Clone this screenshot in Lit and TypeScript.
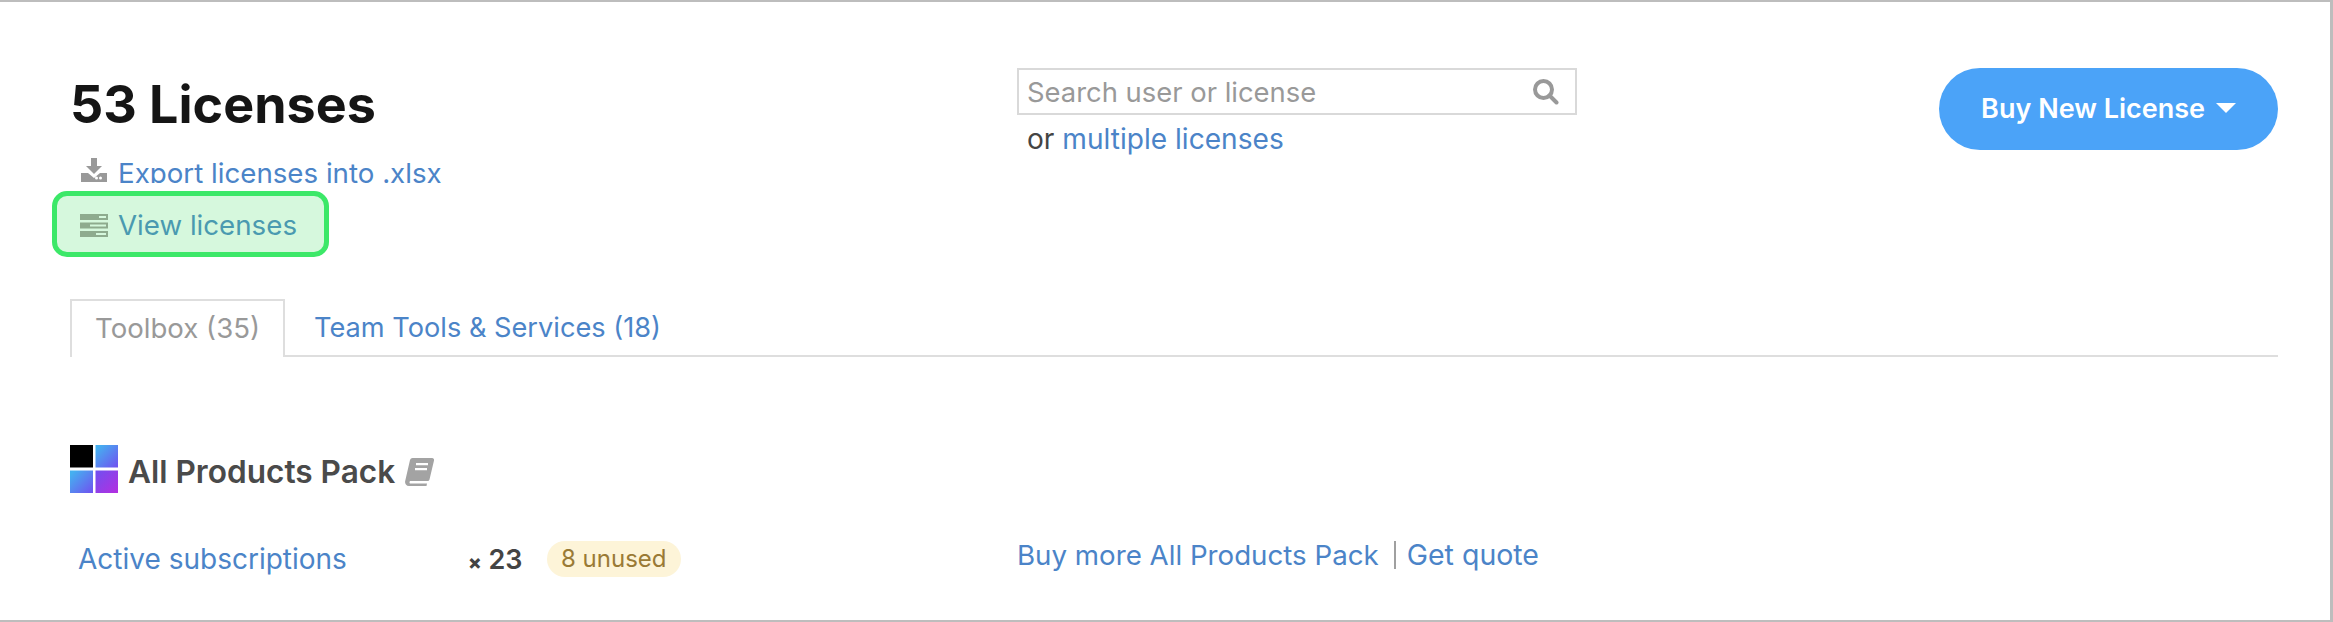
import { css, html, LitElement } from "lit";
import { customElement } from "lit/decorators.js";

@customElement("app-root")
export class AppRoot extends LitElement {
    static styles = css`
      :host {
        display: block;
        width: 2333px;
        height: 622px;
        box-sizing: border-box;
        border: 2px solid #bdbdbd;
        border-left-width: 0;
        border-right-width: 3px;
        overflow: hidden;
        background: #fff;
        font-family: Inter, "Liberation Sans", sans-serif;
        font-size: 27.7px;
        color: #444;
      }
      a {
        color: #4b84c8;
        text-decoration: none;
      }
      .page {
        padding: 0 52px 0 70px;
      }
      .top {
        display: grid;
        grid-template-columns: 947px 560px 1fr;
        padding-top: 66px;
      }
      h1 {
        margin: 2px 0 0;
        font-size: 52px;
        line-height: 70px;
        font-weight: 700;
        color: #151515;
      }
      .action {
        display: flex;
        align-items: center;
        gap: 10px;
      }
      .export {
        height: 29px;
        margin-top: 14px;
        padding-left: 11px;
        gap: 11px;
        overflow: hidden;
        align-items: flex-start;
      }
      .export svg {
        margin-top: 4px;
      }
      .export a {
        line-height: 38px;
      }
      .view {
        box-sizing: border-box;
        width: 277px;
        height: 66px;
        margin: 8px 0 0 -18px;
        padding: 2px 0 0 23px;
        border: 5px solid #3ce868;
        border-radius: 15px;
        background: #d6f8dd;
      }
      .view a {
        color: #4a9ab0;
      }
      .search-box {
        box-sizing: border-box;
        height: 47px;
        display: flex;
        align-items: center;
        justify-content: space-between;
        padding: 0 16px 0 8px;
        border: 2px solid #d9d9d9;
        color: #999;
        font-size: 27.4px;
      }
      .multiple {
        margin: 6px 0 0 10px;
        line-height: 36px;
        font-size: 28.1px;
      }
      .buy {
        justify-self: end;
        display: flex;
        align-items: center;
        gap: 11px;
        box-sizing: border-box;
        height: 82px;
        padding: 0 42px 2px;
        border-radius: 41px;
        background: #4ba3f8;
        color: #fff;
        font-size: 27px;
        font-weight: 600;
      }
      .caret {
        width: 0;
        height: 0;
        border: 10px solid transparent;
        border-top-color: #fff;
        border-bottom: 0;
      }
      .tabs {
        display: flex;
        height: 56px;
        margin-top: 42px;
        border-bottom: 2px solid #dedede;
      }
      .tab {
        display: flex;
        align-items: center;
        box-sizing: border-box;
        height: 56px;
        padding: 0 29px;
        font-size: 27.2px;
      }
      .tab.active {
        height: 58px;
        border: 2px solid #dedede;
        border-bottom: 0;
        padding: 0 23px 2px;
        background: #fff;
        color: #999;
        font-size: 27.6px;
      }
      .product {
        display: flex;
        align-items: center;
        gap: 10px;
        margin-top: 88px;
        height: 48px;
      }
      .product b {
        padding-top: 5px;
        font-size: 31.6px;
        font-weight: 600;
        color: #4a4a4a;
      }
      .product svg:last-child {
        margin-top: 5px;
      }
      .row {
        display: grid;
        grid-template-columns: 947px 1fr;
        align-items: center;
        margin-top: 48px;
      }
      .usage {
        display: flex;
        align-items: center;
        padding-left: 8px;
      }
      .usage .name {
        width: 390px;
        font-size: 28px;
      }
      .count {
        width: 79px;
        font-size: 27px;
        font-weight: 600;
        color: #444;
      }
      .count small {
        font-size: 20px;
        font-weight: 800;
      }
      .badge {
        padding: 0 14px;
        height: 36px;
        line-height: 36px;
        border-radius: 18px;
        background: #fdf4d8;
        color: #9a7a35;
        font-size: 24px;
      }
      .more {
        display: flex;
        align-items: center;
        margin-top: -9px;
      }
      .sep {
        width: 2px;
        height: 28px;
        margin: 0 11px 0 15px;
        background: #a0a0a0;
      }
      .quote {
        font-size: 28.5px;
      }
    `;

    render() {
        return html`<div class="page">
      <div class="top">
        <div>
          <h1>53 Licenses</h1>
          <div class="action export">
            <svg width="26" height="24" viewBox="0 0 26 24" fill="#999">
              <path d="M10 0h6v8h5l-8 8-8-8h5zM0 15h7l6 5 6-5h7v9H0zm18 5a1.500 1.500 0 1 0 3 0 1.500 1.500 0 0 0-3 0zm-4 0a1.500 1.500 0 1 0 3 0 1.500 1.500 0 0 0-3 0z" fill-rule="evenodd" />
            </svg>
            <a href="#">Export licenses into .xlsx</a>
          </div>
          <div class="action view">
            <svg width="28" height="23" viewBox="0 0 28 23" fill="#8eab8e">
              <path fill-rule="evenodd" d="M0 0h28v6H0zm19 2v2h7V2zM0 8.500h28v6H0zm10 2v2h16v-2zM0 17h28v6H0zm16 2v2h10v-2z" />
            </svg>
            <a href="#">View licenses</a>
          </div>
        </div>
        <div>
          <div class="search-box">
            <span>Search user or license</span>
            <svg width="27" height="27" viewBox="0 0 27 27" fill="none" stroke="#999" stroke-width="4">
              <circle cx="11.500" cy="11.500" r="8.500" />
              <path d="M17.500 17.500l7 7" stroke-linecap="round" />
            </svg>
          </div>
          <div class="multiple">or <a href="#">multiple licenses</a></div>
        </div>
        <div class="buy">Buy New License <span class="caret"></span></div>
      </div>

      <div class="tabs">
        <div class="tab active">Toolbox (35)</div>
        <a class="tab" href="#">Team Tools &amp; Services (18)</a>
      </div>

      <div class="product">
        <svg width="48" height="48" viewBox="0 0 48 48">
          <defs>
            <linearGradient id="tr" gradientUnits="userSpaceOnUse" x1="25.500" y1="0" x2="48" y2="22.500">
              <stop offset="0.1" stop-color="#45b0f0" />
              <stop offset="1" stop-color="#7050f0" />
            </linearGradient>
            <linearGradient id="bl" gradientUnits="userSpaceOnUse" x1="0" y1="25.500" x2="23" y2="48">
              <stop offset="0.1" stop-color="#45b0f0" />
              <stop offset="1" stop-color="#7050f0" />
            </linearGradient>
            <linearGradient id="br" gradientUnits="userSpaceOnUse" x1="25.500" y1="25.500" x2="48" y2="48">
              <stop offset="0" stop-color="#7050f0" />
              <stop offset="1" stop-color="#b42ee0" />
            </linearGradient>
          </defs>
          <rect width="23" height="22.500" fill="#000" />
          <rect x="25.500" width="22.500" height="22.500" fill="url(#tr)" />
          <rect y="25.500" width="23" height="22.500" fill="url(#bl)" />
          <rect x="25.500" y="25.500" width="22.500" height="22.500" fill="url(#br)" />
        </svg>
        <b>All Products Pack</b>
        <svg width="29" height="28" viewBox="0 0 29 28" fill="#a3a3a3">
          <path fill-rule="evenodd" d="M8 0h19a2 2 0 0 1 2 2.500l-4.500 19a2 2 0 0 1-2 1.500H5a2 2 0 0 0 0 2.500h17l-.5 2.500H4a4 4 0 0 1-3.800-5L5 2a3 3 0 0 1 3-2zm3 5v2.200h12V5zm-1 5v2.200h12V10z" />
        </svg>
      </div>

      <div class="row">
        <div class="usage">
          <a class="name" href="#">Active subscriptions</a>
          <span class="count"><small>×</small> 23</span>
          <span class="badge">8 unused</span>
        </div>
        <div class="more">
          <a href="#">Buy more All Products Pack</a>
          <span class="sep"></span>
          <a class="quote" href="#">Get quote</a>
        </div>
      </div>
    </div>`;
    }
}
